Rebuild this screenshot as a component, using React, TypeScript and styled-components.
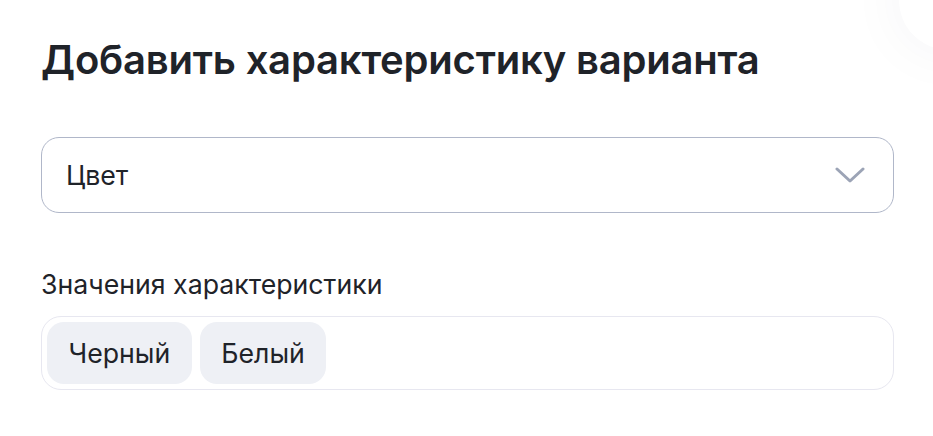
import React from "react";
import styled, { createGlobalStyle } from "styled-components";

const GlobalStyle = createGlobalStyle`
  html, body {
    margin: 0;
    padding: 0;
    background: #ffffff;
  }
  body {
    font-family: Inter, "Noto Sans", Arial, sans-serif;
    color: #1f2329;
    overflow: hidden;
  }
`;

const Panel = styled.div`
  position: relative;
  width: 933px;
  height: 436px;
  box-sizing: border-box;
  padding: 36px 39px 0 41px;
  display: flex;
  flex-direction: column;
  overflow: hidden;
`;

// soft round close button peeking from the corner
const CornerButton = styled.div`
  position: absolute;
  top: -50px;
  right: -66px;
  width: 100px;
  height: 100px;
  border-radius: 50%;
  background: #ffffff;
  box-shadow: 0 0 60px rgba(30, 40, 80, 0.05);
`;

const Title = styled.h1`
  margin: 0;
  font-size: 40px;
  line-height: 48px;
  font-weight: 600;
  letter-spacing: -0.2px;
  color: #1f2329;
`;

const Select = styled.div`
  margin-top: 53px;
  height: 76px;
  box-sizing: border-box;
  border: 1.5px solid #b0b7c9;
  border-radius: 18px;
  display: flex;
  align-items: center;
  justify-content: space-between;
  padding: 0 28px 0 24px;
  font-size: 26.7px;
`;

const Chevron = () => (
  <svg width="30" height="16" viewBox="0 0 30 16" fill="none">
    <path
      d="M2 2 L15 14 L28 2"
      stroke="#9ca4b6"
      strokeWidth="3"
      strokeLinecap="round"
      strokeLinejoin="round"
    />
  </svg>
);

const Label = styled.div`
  margin-top: 55px;
  font-size: 26.7px;
  line-height: 32px;
  color: #1f2329;
`;

const ValuesBox = styled.div`
  margin-top: 16px;
  height: 74px;
  box-sizing: border-box;
  border: 1px solid #e7e7f0;
  border-radius: 20px;
  padding: 5px;
  display: flex;
  gap: 8px;
`;

const Chip = styled.div`
  display: flex;
  align-items: center;
  padding: 0 21.5px;
  background: #eef0f5;
  border-radius: 17px;
  font-size: 26.7px;
  color: #1f2329;
`;

export default function App() {
  const values = ["Черный", "Белый"];
  return (
    <>
      <GlobalStyle />
      <Panel>
        <CornerButton />
        <Title>Добавить характеристику варианта</Title>
        <Select>
          <span>Цвет</span>
          <Chevron />
        </Select>
        <Label>Значения характеристики</Label>
        <ValuesBox>
          {values.map((v) => (
            <Chip key={v}>{v}</Chip>
          ))}
        </ValuesBox>
      </Panel>
    </>
  );
}
